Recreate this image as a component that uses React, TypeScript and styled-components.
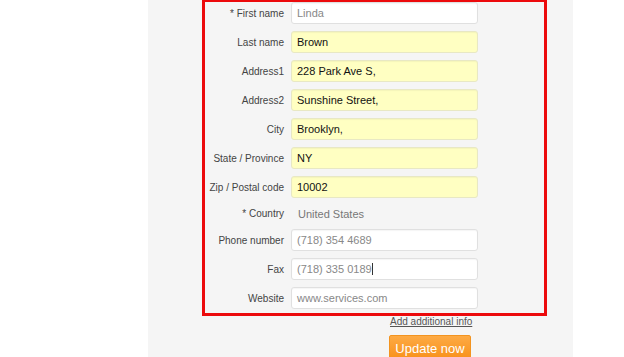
import styled, { createGlobalStyle } from 'styled-components';

const GlobalStyle = createGlobalStyle`
  html, body {
    margin: 0;
    padding: 0;
    background: #ffffff;
    font-family: "Liberation Sans", Arial, sans-serif;
  }
`;

const Page = styled.div`
  display: flex;
  height: 357px;
  overflow: hidden;
`;

const Panel = styled.div`
  margin-left: 148px;
  width: 425px;
  background: #f5f5f5;
  display: flex;
  flex-direction: column;
`;

const Box = styled.div`
  margin-left: 54px;
  width: 345px;
  box-sizing: border-box;
  border: 3px solid #ec0a0c;
  margin-top: -1px;
  padding: 0 0 4px 0;
  display: flex;
  flex-direction: column;
  gap: 7px;
`;

const Row = styled.div<{ $short?: boolean }>`
  display: grid;
  grid-template-columns: 79px 187px;
  column-gap: 7px;
  align-items: center;
  height: ${(p) => (p.$short ? '17px' : '22px')};
`;

const Label = styled.span`
  text-align: right;
  font-size: 10px;
  color: #444;
  white-space: nowrap;
`;

const Field = styled.div<{ $filled?: boolean; $muted?: boolean }>`
  box-sizing: border-box;
  height: 22px;
  display: flex;
  align-items: center;
  padding: 0 5px;
  border-radius: 3px;
  font-size: 11px;
  background: ${(p) => (p.$filled ? '#ffffc2' : '#ffffff')};
  border: 1px solid ${(p) => (p.$filled ? '#e8e8c4' : '#e0e0e0')};
  color: ${(p) => (p.$muted ? '#888' : '#111')};
  box-shadow: inset 0 1px 1px rgba(0, 0, 0, 0.04);
`;

const Caret = styled.span`
  display: inline-block;
  width: 1px;
  height: 12px;
  background: #333;
`;

const Plain = styled.span`
  font-size: 11px;
  color: #777;
  padding-left: 7px;
`;

const Actions = styled.div`
  margin-left: 241px;
  display: flex;
  flex-direction: column;
  align-items: flex-start;
  gap: 7px;
`;

const Link = styled.a`
  font-size: 10px;
  color: #555;
  text-decoration: underline;
  line-height: 12px;
  padding-left: 1px;
`;

const Button = styled.button`
  width: 82px;
  height: 26px;
  border: 1px solid #f39420;
  border-radius: 2px;
  background: linear-gradient(#fdaa44, #f8901a);
  color: #fff;
  font-family: "Liberation Sans", Arial, sans-serif;
  font-size: 13px;
  padding: 0;
  cursor: pointer;
`;

type FieldDef = { label: string; value: string; filled?: boolean; muted?: boolean; caret?: boolean };

const top: FieldDef[] = [
  { label: '* First name', value: 'Linda', muted: true },
  { label: 'Last name', value: 'Brown', filled: true },
  { label: 'Address1', value: '228 Park Ave S,', filled: true },
  { label: 'Address2', value: 'Sunshine Street,', filled: true },
  { label: 'City', value: 'Brooklyn,', filled: true },
  { label: 'State / Province', value: 'NY', filled: true },
  { label: 'Zip / Postal code', value: '10002', filled: true },
];

const bottom: FieldDef[] = [
  { label: 'Phone number', value: '(718) 354 4689', muted: true },
  { label: 'Fax', value: '(718) 335 0189', muted: true, caret: true },
  { label: 'Website', value: 'www.services.com', muted: true },
];

const renderRow = (f: FieldDef) => (
  <Row key={f.label}>
    <Label>{f.label}</Label>
    <Field $filled={f.filled} $muted={f.muted}>
      {f.value}
      {f.caret && <Caret />}
    </Field>
  </Row>
);

export default function App() {
  return (
    <>
      <GlobalStyle />
      <Page>
        <Panel>
          <Box>
            {top.map(renderRow)}
            <Row $short>
              <Label>* Country</Label>
              <Plain>United States</Plain>
            </Row>
            {bottom.map(renderRow)}
          </Box>
          <Actions>
            <Link href="#">Add additional info</Link>
            <Button>Update now</Button>
          </Actions>
        </Panel>
      </Page>
    </>
  );
}
